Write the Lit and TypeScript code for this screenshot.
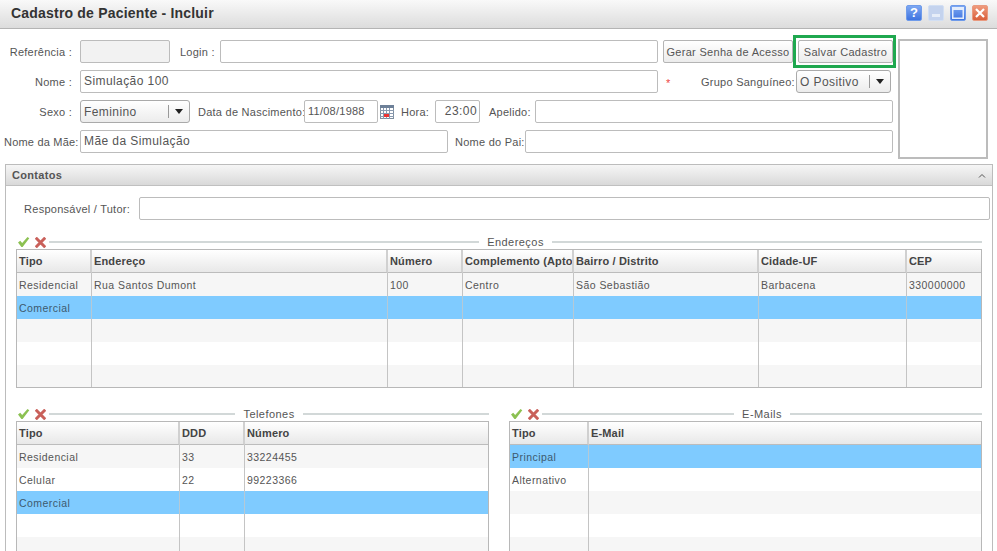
import { LitElement, html, css, svg } from "lit";
import { customElement } from "lit/decorators.js";

type Col = { title: string; w: number };
const F = "#f6f6f6";

const check = svg`<svg class="ic" width="13" height="12" viewBox="0 0 13 12"><path d="M1 6.5 L3.2 4.8 L5.2 7 L10.5 1 L12.3 2.2 L5.6 11 L4.4 11 Z" fill="#8cc152"/></svg>`;
const cross = svg`<svg class="ic" width="11" height="11" viewBox="0 0 11 11"><path d="M1.8 1.8 L9.2 9.2 M9.2 1.8 L1.8 9.2" stroke="#c9605a" stroke-width="3" stroke-linecap="square"/></svg>`;

@customElement("app-root")
export class AppRoot extends LitElement {
  static styles = css`
    :host { display: flex; flex-direction: column; height: 551px; width: 997px; overflow: hidden; background: #fff;
      font-family: "Liberation Sans", Arial, sans-serif; font-size: 11px; color: #444; }
    * { box-sizing: border-box; }
    .title { height: 29px; flex: none; display: flex; align-items: center; padding: 0 9px 2px 11px;
      background: linear-gradient(#f9f9f9, #dcdcdc); border-bottom: 1px solid #b4b4b4; }
    .title h1 { flex: 1; margin: 0; font-size: 14px; font-weight: bold; color: #333; letter-spacing: .2px; }
    .winbtns { display: flex; gap: 6px; }
    .winbtn { width: 16px; height: 16px; border-radius: 2px; display: flex; align-items: center; justify-content: center; }
    .winbtn svg { display: block; }
    .blue { background: linear-gradient(#7da7f2, #3f74e0); border: 1px solid #6f9bea; }
    .faded { background: #c4d3ee; border: 1px solid #d2dff3; }
    .red { background: linear-gradient(#ef9a7c, #d9603c); border: 1px solid #e99a80; }
    .q { color: #fff; font-weight: bold; font-size: 13px; line-height: 14px; }

    .top { flex: none; display: flex; padding: 6px 0 0 0; height: 135px; }
    .form { width: 893px; flex: none; display: flex; flex-direction: column; }
    .row { display: flex; align-items: center; height: 23px; margin-bottom: 7px; flex: none; }
    .row.first { margin-top: 5px; }
    .lbl { color: #555; letter-spacing: .25px; white-space: nowrap; flex: none; }
    .right { text-align: right; }
    .input { height: 23px; border: 1px solid #bcbcbc; border-radius: 2px; background: #fff; flex: none;
      padding: 0 3px; font-size: 12px; line-height: 21px; color: #555; letter-spacing: .42px; white-space: nowrap; }
    .input.ro { background: #f2f2f2; }
    .select { height: 23px; border: 1px solid #aaa; border-radius: 3px; background: linear-gradient(#fff, #ececec);
      display: flex; align-items: center; flex: none; font-size: 12px; letter-spacing: .42px; color: #555; padding-left: 3px; }
    .select span { flex: 1; }
    .select i { width: 21px; height: 13px; border-left: 1px solid #999; display: flex; align-items: center; justify-content: center; flex: none; }
    .select i::after { content: ""; border: 4px solid transparent; border-top: 5px solid #222; border-bottom: 0; }
    .btn { height: 23px; border: 1px solid #b4b4b4; border-radius: 2px; background: linear-gradient(#fff, #ececec);
      display: flex; align-items: center; justify-content: center; color: #555; letter-spacing: .3px; flex: none; }
    .savebox { border: 3px solid #1fa84f; width: 103px; height: 33px; padding: 2px; margin: -5px 0; flex: none; }
    .savebox .btn { width: 95px; }
    .req { color: #e44; margin-left: 8px; width: 35px; flex: none; font-size: 11px; padding-top: 3px; }
    .photo { width: 90px; height: 120px; border: 2px solid #bcbcbc; margin: 4px 0 0 5px; flex: none; background: #fff; }

    .panel { flex: 1; margin: 0 4px 0 5px; border: 1px solid #bcbcbc; border-bottom: 0; display: flex; flex-direction: column; min-height: 0; }
    .phead { height: 21px; flex: none; display: flex; align-items: center; justify-content: space-between; padding: 0 6px;
      background: linear-gradient(#f6f6f6, #d9d9d9); border-bottom: 1px solid #c0c0c0; font-weight: bold; color: #555; letter-spacing: .3px; }
    .pbody { padding: 11px 10px 0 10px; display: flex; flex-direction: column; }
    .resp { display: flex; align-items: center; }
    .legend { display: flex; align-items: center; height: 14px; }
    .icons { display: flex; align-items: center; width: 33px; flex: none; padding-left: 1px; gap: 5px; }
    .icons + .hr { margin-left: 0; }
    .hr { flex: 1; height: 2px; background: #d2d8d8; }
    .legend b { font-weight: normal; padding: 0 8px; color: #555; font-size: 11px; letter-spacing: .45px; }
    table { border-collapse: separate; border-spacing: 0; table-layout: fixed; width: 100%; border: 1px solid #b8b8b8; }
    th { height: 23px; padding: 0 2px; text-align: left; font-size: 11px; font-weight: bold; color: #444; overflow: hidden; white-space: nowrap;
      background: linear-gradient(#fff, #e8e8e8); border-bottom: 1px solid #bcbcbc; border-right: 2px solid #d0d0d0; letter-spacing: .15px; }
    td { height: 23px; padding: 0 2px; font-size: 10.5px; color: #555; overflow: hidden; white-space: nowrap;
      border-right: 1px solid #c4c4c4; letter-spacing: .45px; }
    th:last-child, td:last-child { border-right: 0; }
    tr:last-child td { height: 22px; }
    tr.odd td { background: ${F as any === "" ? "" : css`#f6f6f6`}; }
    tr.even td { background: #fff; }
    tr.sel td { background: #7fcbff; color: #3d5a6e; border-right-color: #b5c9d6; }
    .grids { display: flex; gap: 20px; margin-top: 19px; }
    .grids > div { flex: none; }
  `;

  grid(cols: Col[], rows: string[][], sel: number) {
    return html`<table>
      <colgroup>${cols.map((c) => html`<col style="width:${c.w}px" />`)}</colgroup>
      <thead><tr>${cols.map((c) => html`<th>${c.title}</th>`)}</tr></thead>
      <tbody>
        ${rows.map(
          (r, i) => html`<tr class=${i === sel ? "sel" : i % 2 === 0 ? "odd" : "even"}>
            ${cols.map((_, j) => html`<td>${r[j] ?? ""}</td>`)}
          </tr>`
        )}
      </tbody>
    </table>`;
  }

  legend(t: string) {
    return html`<div class="legend"><div class="icons">${check}${cross}</div><div class="hr"></div><b>${t}</b><div class="hr"></div></div>`;
  }

  render() {
    return html`
      <div class="title">
        <h1>Cadastro de Paciente - Incluir</h1>
        <div class="winbtns">
          <div class="winbtn blue"><span class="q">?</span></div>
          <div class="winbtn faded"><svg width="8" height="8" viewBox="0 0 8 8"><rect x="0" y="5" width="8" height="3" fill="#e6edf8"/></svg></div>
          <div class="winbtn blue"><svg width="12" height="12" viewBox="0 0 12 12"><rect x=".75" y=".75" width="10.5" height="10.5" fill="none" stroke="#e4edfc" stroke-width="1.5"/><rect x="1" y="1" width="10" height="2" fill="#e4edfc"/></svg></div>
          <div class="winbtn red"><svg width="12" height="12" viewBox="0 0 12 12"><path d="M2 2 L10 10 M10 2 L2 10" stroke="#fff" stroke-width="2.2"/></svg></div>
        </div>
      </div>
      <div class="top">
        <div class="form">
          <div class="row first">
            <div class="lbl right" style="width:72px">Referência :</div>
            <div class="input ro" style="width:90px;margin-left:8px"></div>
            <div class="lbl" style="width:40px;margin-left:10px">Login :</div>
            <div class="input" style="width:438px"></div>
            <div class="btn" style="width:130px;margin-left:5px">Gerar Senha de Acesso</div>
            <div class="savebox"><div class="btn">Salvar Cadastro</div></div>
          </div>
          <div class="row">
            <div class="lbl right" style="width:72px">Nome :</div>
            <div class="input" style="width:578px;margin-left:8px">Simulação 100</div>
            <div class="req">*</div>
            <div class="lbl" style="width:95px">Grupo Sanguíneo:</div>
            <div class="select" style="width:95px"><span>O Positivo</span><i></i></div>
          </div>
          <div class="row">
            <div class="lbl right" style="width:72px">Sexo :</div>
            <div class="select" style="width:110px;margin-left:8px"><span>Feminino</span><i></i></div>
            <div class="lbl" style="width:106px;margin-left:8px">Data de Nascimento:</div>
            <div class="input" style="width:74px;font-size:11px;letter-spacing:.25px">11/08/1988</div>
            <svg style="margin-left:2px;flex:none" width="14" height="14" viewBox="0 0 14 14">
              <rect x=".5" y=".5" width="13" height="13" fill="#fff" stroke="#7f8fa0"/>
              <rect x="0" y="0" width="14" height="3" fill="#6d8098"/>
              <path d="M0 5.5H14M0 8.5H14M0 11.5H14M3.5 3V14M6.5 3V14M9.5 3V14" stroke="#8a9ab0" stroke-width="1"/>
              <rect x="4" y="9" width="5" height="3" fill="#e33"/>
            </svg>
            <div class="lbl" style="width:34px;margin-left:7px">Hora:</div>
            <div class="input" style="width:45px;text-align:right;padding-right:2px">23:00</div>
            <div class="lbl" style="width:46px;margin-left:9px">Apelido:</div>
            <div class="input" style="width:358px"></div>
          </div>
          <div class="row">
            <div class="lbl" style="width:76px;margin-left:4px;letter-spacing:.2px">Nome da Mãe:</div>
            <div class="input" style="width:368px">Mãe da Simulação</div>
            <div class="lbl" style="width:70px;margin-left:7px">Nome do Pai:</div>
            <div class="input" style="width:368px"></div>
          </div>
        </div>
        <div class="photo"></div>
      </div>
      <div class="panel">
        <div class="phead"><span>Contatos</span>
          <svg width="8" height="5" viewBox="0 0 8 5"><path d="M1 4.5 L4 1.5 L7 4.5" fill="none" stroke="#555" stroke-width="1"/></svg>
        </div>
        <div class="pbody">
          <div class="resp">
            <div class="lbl right" style="width:107px;margin-left:7px">Responsável / Tutor:</div>
            <div class="input" style="width:851px;margin-left:9px"></div>
          </div>
          <div style="margin-top:15px;width:966px">
            ${this.legend("Endereços")}
            ${this.grid(
              [
                { title: "Tipo", w: 75 },
                { title: "Endereço", w: 296 },
                { title: "Número", w: 75 },
                { title: "Complemento (Apto/Sala)", w: 111 },
                { title: "Bairro / Distrito", w: 185 },
                { title: "Cidade-UF", w: 148 },
                { title: "CEP", w: 74 },
              ],
              [
                ["Residencial", "Rua Santos Dumont", "100", "Centro", "São Sebastião", "Barbacena", "330000000"],
                ["Comercial"],
                [], [], [],
              ],
              1
            )}
          </div>
          <div class="grids">
            <div style="width:473px">
              ${this.legend("Telefones")}
              ${this.grid(
                [
                  { title: "Tipo", w: 163 },
                  { title: "DDD", w: 65 },
                  { title: "Número", w: 243 },
                ],
                [["Residencial", "33", "33224455"], ["Celular", "22", "99223366"], ["Comercial"], [], []],
                2
              )}
            </div>
            <div style="width:473px">
              ${this.legend("E-Mails")}
              ${this.grid(
                [
                  { title: "Tipo", w: 79 },
                  { title: "E-Mail", w: 392 },
                ],
                [["Principal"], ["Alternativo"], [], [], []],
                0
              )}
            </div>
          </div>
        </div>
      </div>
    `;
  }
}
